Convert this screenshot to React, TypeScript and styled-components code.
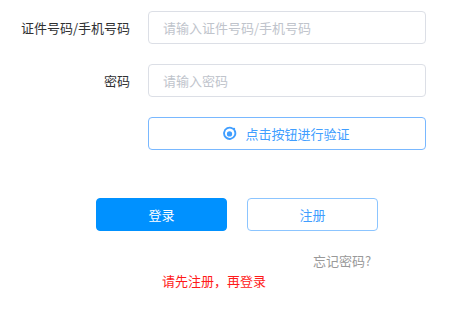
import React from 'react'
import styled, { createGlobalStyle } from 'styled-components'

const GlobalStyle = createGlobalStyle`
  html, body {
    margin: 0;
    padding: 0;
    background: #ffffff;
    font-family: 'Noto Sans CJK SC', 'Liberation Sans', sans-serif;
  }
  * {
    box-sizing: border-box;
  }
`

const Page = styled.div`
  width: 454px;
  height: 311px;
  padding-top: 11px;
  display: flex;
  flex-direction: column;
`

const FormRow = styled.div`
  display: flex;
  align-items: center;
  height: 33px;
  margin-bottom: 20px;
`

const Label = styled.label`
  width: 130px;
  text-align: right;
  font-size: 13px;
  color: #303133;
  margin-right: 18px;
  white-space: nowrap;
`

const Input = styled.input`
  width: 278px;
  height: 33px;
  border: 1px solid #dcdfe6;
  border-radius: 4px;
  padding: 0 14px;
  font-size: 13px;
  font-family: inherit;
  color: #606266;
  outline: none;

  &::placeholder {
    color: #c0c4cc;
  }
`

const VerifyButton = styled.button`
  width: 278px;
  height: 33px;
  margin-left: 148px;
  border: 1px solid #79b8ff;
  border-radius: 4px;
  background: #ffffff;
  color: #409eff;
  font-size: 13px;
  font-family: inherit;
  display: flex;
  align-items: center;
  justify-content: center;
  gap: 8px;
  padding: 0 2px 0 0;
`

const ButtonRow = styled.div`
  display: flex;
  gap: 20px;
  margin-left: 96px;
  margin-top: 48px;
`

const ActionButton = styled.button<{ $primary?: boolean }>`
  width: 131px;
  height: 33px;
  border-radius: 4px;
  font-size: 13px;
  font-family: inherit;
  border: 1px solid ${p => (p.$primary ? '#0091ff' : '#8cc5ff')};
  background: ${p => (p.$primary ? '#0091ff' : '#ffffff')};
  color: ${p => (p.$primary ? '#ffffff' : '#409eff')};
`

const ForgotLink = styled.a`
  align-self: flex-start;
  margin-left: 313px;
  margin-top: 20px;
  font-size: 13px;
  color: #999999;
  line-height: 20px;
`

const Notice = styled.div`
  margin-left: 162px;
  font-size: 13px;
  color: #ff1a1a;
  line-height: 20px;
`

const VerifyIcon = () => (
  <svg width="15" height="15" viewBox="0 0 16 16">
    <path
      d="M11.2 2.6 A6 6 0 1 0 13.4 4.8"
      fill="none"
      stroke="#409eff"
      strokeWidth="2"
      strokeLinecap="round"
    />
    <circle cx="8" cy="8.5" r="2.8" fill="#409eff" />
    <circle cx="12.8" cy="3.2" r="1.3" fill="#409eff" />
  </svg>
)

export default function App() {
  return (
    <>
      <GlobalStyle />
      <Page>
        <FormRow>
          <Label>证件号码/手机号码</Label>
          <Input placeholder="请输入证件号码/手机号码" />
        </FormRow>
        <FormRow>
          <Label>密码</Label>
          <Input type="password" placeholder="请输入密码" />
        </FormRow>
        <VerifyButton>
          <VerifyIcon />
          点击按钮进行验证
        </VerifyButton>
        <ButtonRow>
          <ActionButton $primary>登录</ActionButton>
          <ActionButton>注册</ActionButton>
        </ButtonRow>
        <ForgotLink>忘记密码?</ForgotLink>
        <Notice>请先注册，再登录</Notice>
      </Page>
    </>
  )
}
